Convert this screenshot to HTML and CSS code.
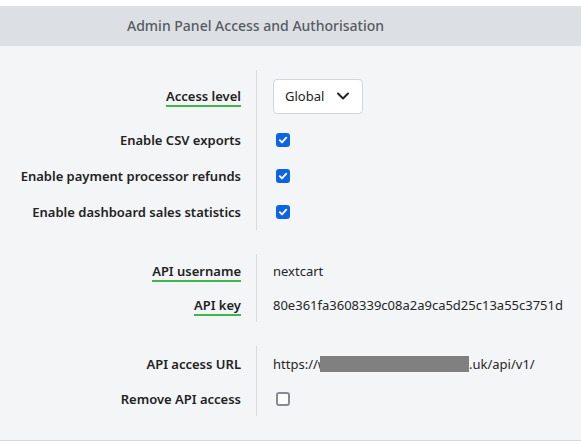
FILE: index.html
```html
<!DOCTYPE html>
<html lang="en">
<head>
<meta charset="utf-8">
<title>Admin Panel Access and Authorisation</title>
<link rel="stylesheet" href="styles.css">
</head>
<body>
<div class="page">
  <div class="header">Admin Panel Access and Authorisation</div>
  <div class="panel">
    <div class="group g1">
      <div class="label tall"><span class="tip">Access level</span></div>
      <div class="value tall">
        <div class="select">Global
          <svg class="chev" width="14" height="10" viewBox="0 0 14 10"><path d="M2 2.5 L7 7.5 L12 2.5" fill="none" stroke="#222" stroke-width="2" stroke-linecap="round" stroke-linejoin="round"/></svg>
        </div>
      </div>
      <div class="label">Enable CSV exports</div>
      <div class="value"><span class="cb on"><svg width="10" height="10" viewBox="0 0 10 10"><path d="M1.8 5.2 L4 7.4 L8.3 2.7" fill="none" stroke="#fff" stroke-width="1.9" stroke-linecap="round" stroke-linejoin="round"/></svg></span></div>
      <div class="label">Enable payment processor refunds</div>
      <div class="value"><span class="cb on"><svg width="10" height="10" viewBox="0 0 10 10"><path d="M1.8 5.2 L4 7.4 L8.3 2.7" fill="none" stroke="#fff" stroke-width="1.9" stroke-linecap="round" stroke-linejoin="round"/></svg></span></div>
      <div class="label">Enable dashboard sales statistics</div>
      <div class="value"><span class="cb on"><svg width="10" height="10" viewBox="0 0 10 10"><path d="M1.8 5.2 L4 7.4 L8.3 2.7" fill="none" stroke="#fff" stroke-width="1.9" stroke-linecap="round" stroke-linejoin="round"/></svg></span></div>
    </div>
    <div class="group g2">
      <div class="label"><span class="tip">API username</span></div>
      <div class="value">nextcart</div>
      <div class="label"><span class="tip">API key</span></div>
      <div class="value">80e361fa3608339c08a2a9ca5d25c13a55c3751d</div>
    </div>
    <div class="group g3">
      <div class="label">API access URL</div>
      <div class="value">https://w<span class="redact"></span>.uk/api/v1/</div>
      <div class="label">Remove API access</div>
      <div class="value"><span class="cb off"></span></div>
    </div>
  </div>
</div>
</body>
</html>
```
FILE: styles.css
```css
html, body {
  margin: 0;
  padding: 0;
  background: #ffffff;
}
body {
  font-family: "Noto Sans", "Open Sans", sans-serif;
  font-size: 13px;
  color: #222;
}
.page {
  padding-top: 6px;
}
.header {
  height: 40px;
  line-height: 40px;
  background: #dcdfe3;
  color: #555b63;
  font-size: 14px;
  font-weight: 500;
  padding-left: 127px;
}
.panel {
  background: #f4f5f7;
  padding: 24px 0;
  border-bottom: 1px solid #d5d8dc;
  display: flex;
  flex-direction: column;
  gap: 24px;
}
.group {
  display: grid;
  grid-template-columns: 256px 1fr;
}
.label {
  display: flex;
  align-items: center;
  justify-content: flex-end;
  padding-right: 15px;
  font-weight: 600;
  color: #222;
  height: 36px;
}
.value {
  display: flex;
  align-items: center;
  border-left: 1px solid #d9dbdf;
  padding-left: 16px;
  height: 36px;
  color: #262626;
}
.g1 .tall {
  height: 52px;
}
.g2 .label, .g2 .value {
  height: 34px;
}
.g3 .label, .g3 .value {
  height: 35px;
}
.tip {
  display: inline-block;
  line-height: 17px;
  border-bottom: 2px solid #3cb94a;
  margin-top: 2px;
}
.select {
  box-sizing: border-box;
  width: 90px;
  height: 35px;
  background: #fff;
  border: 1px solid #d2d5d9;
  border-radius: 4px;
  display: flex;
  align-items: center;
  padding-left: 11px;
  gap: 12px;
  color: #222;
}
.chev {
  display: block;
}
.cb {
  box-sizing: border-box;
  width: 14px;
  height: 14px;
  margin-left: 3px;
  border-radius: 3px;
  display: flex;
  align-items: center;
  justify-content: center;
}
.cb.on {
  background: #0d63e4;
}
.cb.off {
  background: #fff;
  border: 2px solid #8a8a94;
}
.redact {
  display: inline-block;
  width: 149px;
  height: 16px;
  background: #808080;
  margin-left: -8px;
}
```
